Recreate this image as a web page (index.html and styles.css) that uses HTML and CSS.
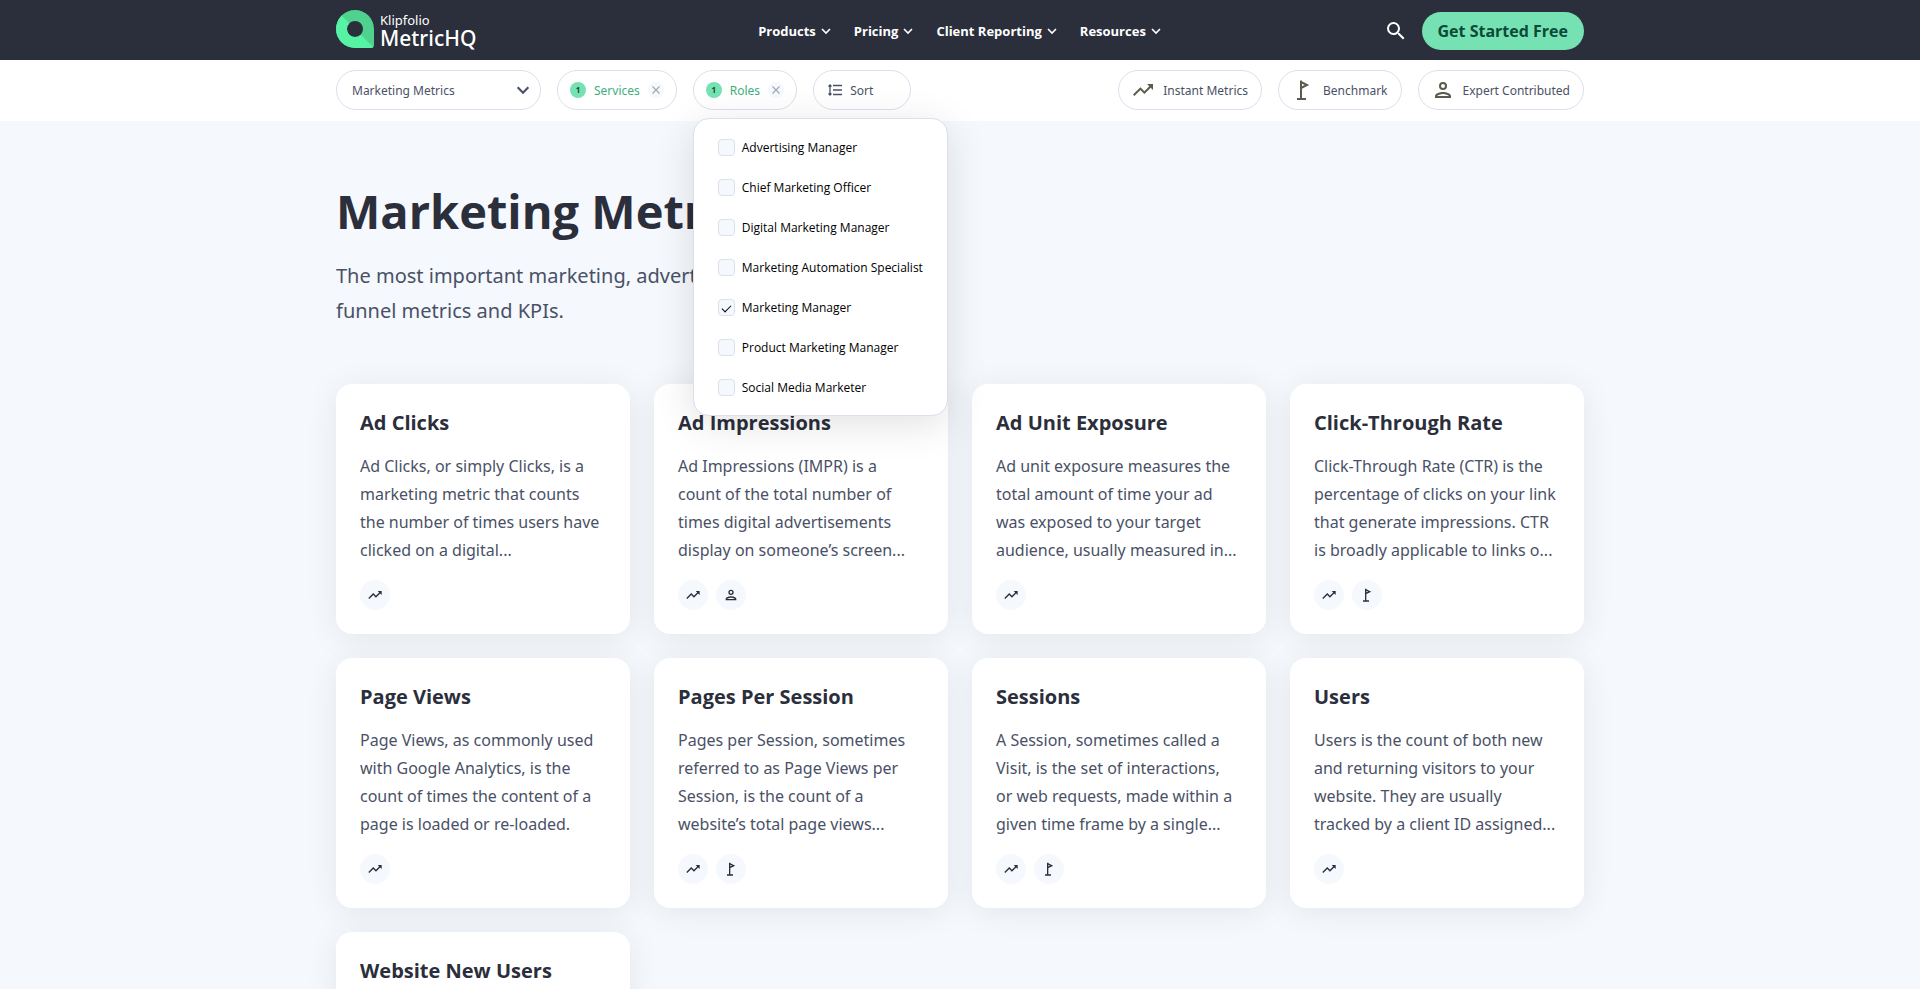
FILE: index.html
```html
<!DOCTYPE html>
<html lang="en">
<head>
<meta charset="utf-8">
<title>Marketing Metrics | Klipfolio MetricHQ</title>
<link rel="stylesheet" href="styles.css">
</head>
<body>
<svg class="sprite" aria-hidden="true">
  <symbol id="chevron" viewBox="0 0 12 12"><path d="M2 4l4 4 4-4" fill="none" stroke="currentColor" stroke-width="1.6"/></symbol>
  <symbol id="trend" viewBox="0 0 24 24"><path fill="currentColor" d="M16 6l2.29 2.29-4.88 4.88-4-4L2 16.59 3.41 18l6-6 4 4 6.3-6.29L22 12V6z"/></symbol>
  <symbol id="person" viewBox="0 0 24 24"><path fill="currentColor" fill-rule="evenodd" d="M12 4a4 4 0 1 0 0 8 4 4 0 0 0 0-8zm0 2a2 2 0 1 1 0 4 2 2 0 0 1 0-4zm0 8c-2.7 0-8 1.3-8 4v2h16v-2c0-2.700-5.300-4-8-4zm-5.800 4c.6-.9 3.300-2 5.800-2s5.200 1.100 5.800 2z"/></symbol>
  <symbol id="flag" viewBox="0 0 24 24"><path fill="none" stroke="currentColor" stroke-width="2" d="M6 21h9M10 21V2.500M10 4l6 3-6 3"/></symbol>
  <symbol id="cross" viewBox="0 0 16 16"><path d="M4.500 4.500l7 7m0-7l-7 7" fill="none" stroke="currentColor" stroke-width="1.200"/></symbol>
</svg>

<header class="header">
  <div class="container header-row">
    <a class="logo" href="#">
      <svg class="logo-mark" viewBox="0 0 38 38" aria-hidden="true">
        <path fill="#4ed28e" fill-rule="evenodd" d="M19 0a19 19 0 0 0 0 38h16a3 3 0 0 0 3-3V19A19 19 0 0 0 19 0zm0 11a8 8 0 1 1 0 16 8 8 0 0 1 0-16z"/>
        <path fill="#57f3a4" d="M5.600 5.600A19 19 0 0 0 19 38h16a3 3 0 0 0 2.100-.9L24.700 24.700A8 8 0 0 1 13.300 13.300z"/>
      </svg>
      <span class="logo-text"><span class="logo-brand">Klipfolio</span><span class="logo-name">MetricHQ</span></span>
    </a>
    <nav class="nav">
      <button class="nav-item" type="button">Products<svg><use href="#chevron"/></svg></button>
      <button class="nav-item" type="button">Pricing<svg><use href="#chevron"/></svg></button>
      <button class="nav-item" type="button">Client Reporting<svg><use href="#chevron"/></svg></button>
      <button class="nav-item" type="button">Resources<svg><use href="#chevron"/></svg></button>
    </nav>
    <div class="actions">
      <button class="search" type="button" aria-label="Search"><svg viewBox="0 0 24 24"><path fill="currentColor" d="M15.500 14h-.79l-.28-.27A6.470 6.470 0 0 0 16 9.500 6.500 6.500 0 1 0 9.500 16c1.610 0 3.090-.59 4.230-1.570l.27.28v.79l5 4.990L20.490 19l-4.990-5zm-6 0C7.010 14 5 11.990 5 9.500S7.010 5 9.500 5 14 7.010 14 9.500 11.990 14 9.500 14z"/></svg></button>
      <a class="cta" href="#">Get Started Free</a>
    </div>
  </div>
</header>

<div class="filters">
  <div class="container filter-row">
    <div class="category">
      <select class="chip category-select" aria-label="Category"><option>Marketing Metrics</option></select>
      <svg class="category-arrow" aria-hidden="true"><use href="#chevron"/></svg>
    </div>
    <div class="chip chip-active">
      <span class="count">1</span><button class="chip-label" type="button">Services</button>
      <button class="clear" type="button" aria-label="Clear services"><svg><use href="#cross"/></svg></button>
    </div>
    <div class="dropdown">
      <div class="chip chip-active">
        <span class="count">1</span><button class="chip-label" type="button" aria-expanded="true">Roles</button>
        <button class="clear" type="button" aria-label="Clear roles"><svg><use href="#cross"/></svg></button>
      </div>
      <div class="menu">
        <label class="option"><input type="checkbox">Advertising Manager</label>
        <label class="option"><input type="checkbox">Chief Marketing Officer</label>
        <label class="option"><input type="checkbox">Digital Marketing Manager</label>
        <label class="option"><input type="checkbox">Marketing Automation Specialist</label>
        <label class="option"><input type="checkbox" checked>Marketing Manager</label>
        <label class="option"><input type="checkbox">Product Marketing Manager</label>
        <label class="option"><input type="checkbox">Social Media Marketer</label>
      </div>
    </div>
    <button class="chip sort" type="button">
      <svg viewBox="0 0 14 12" aria-hidden="true"><path d="M5 1.500h9M5 6h9M5 10.500h9M2 1v10M.5 2.500L2 1l1.500 1.500M.5 9.500L2 11l1.500-1.500" fill="none" stroke="currentColor" stroke-width="1.300"/></svg>Sort
    </button>
    <div class="tags">
      <button class="chip tag" type="button"><svg><use href="#trend"/></svg>Instant Metrics</button>
      <button class="chip tag" type="button"><svg><use href="#flag"/></svg>Benchmark</button>
      <button class="chip tag" type="button"><svg><use href="#person"/></svg>Expert Contributed</button>
    </div>
  </div>
</div>

<main class="container main">
  <h1 class="title">Marketing Metrics</h1>
  <p class="intro">The most important marketing, advertising, and sales funnel metrics and KPIs.</p>
  <div class="grid">
    <article class="card"><h2>Ad Clicks</h2><p>Ad Clicks, or simply Clicks, is a marketing metric that counts the number of times users have clicked on a digital...</p><div class="badges"><span><svg><use href="#trend"/></svg></span></div></article>
    <article class="card"><h2>Ad Impressions</h2><p>Ad Impressions (IMPR) is a count of the total number of times digital advertisements display on someone’s screen...</p><div class="badges"><span><svg><use href="#trend"/></svg></span><span><svg><use href="#person"/></svg></span></div></article>
    <article class="card"><h2>Ad Unit Exposure</h2><p>Ad unit exposure measures the total amount of time your ad was exposed to your target audience, usually measured in...</p><div class="badges"><span><svg><use href="#trend"/></svg></span></div></article>
    <article class="card"><h2>Click-Through Rate</h2><p>Click-Through Rate (CTR) is the percentage of clicks on your link that generate impressions. CTR is broadly applicable to links o...</p><div class="badges"><span><svg><use href="#trend"/></svg></span><span><svg><use href="#flag"/></svg></span></div></article>
    <article class="card"><h2>Page Views</h2><p>Page Views, as commonly used with Google Analytics, is the count of times the content of a page is loaded or re-loaded.</p><div class="badges"><span><svg><use href="#trend"/></svg></span></div></article>
    <article class="card"><h2>Pages Per Session</h2><p>Pages per Session, sometimes referred to as Page Views per Session, is the count of a website’s total page views...</p><div class="badges"><span><svg><use href="#trend"/></svg></span><span><svg><use href="#flag"/></svg></span></div></article>
    <article class="card"><h2>Sessions</h2><p>A Session, sometimes called a Visit, is the set of interactions, or web requests, made within a given time frame by a single...</p><div class="badges"><span><svg><use href="#trend"/></svg></span><span><svg><use href="#flag"/></svg></span></div></article>
    <article class="card"><h2>Users</h2><p>Users is the count of both new and returning visitors to your website. They are usually tracked by a client ID assigned...</p><div class="badges"><span><svg><use href="#trend"/></svg></span></div></article>
    <article class="card"><h2>Website New Users</h2><p>Website New Users is the count of first-time visitors to your website in a given period.</p><div class="badges"><span><svg><use href="#trend"/></svg></span></div></article>
  </div>
</main>
</body>
</html>
```

FILE: styles.css
```css
* { box-sizing: border-box; }

body {
  margin: 0;
  background: #f5f8fd;
  color: #4a5166;
  font-family: "Open Sans", "Noto Sans", sans-serif;
  font-size: 16px;
}

button, select, input { font: inherit; color: inherit; margin: 0; }
button { background: none; border: 0; padding: 0; cursor: pointer; }
a { text-decoration: none; }
.sprite { display: none; }

.container {
  width: 100%;
  max-width: 1248px;
  margin: 0 auto;
}

/* Header */
.header { position: relative; z-index: 3; background: #2b2e3b; color: #fff; }
.header-row { display: grid; grid-template-columns: 1fr auto 1fr; align-items: center; height: 60px; padding-top: 2px; }
.logo { display: flex; align-items: center; gap: 6px; margin-bottom: 4px; color: #fff; }
.logo-mark { width: 38px; height: 38px; }
.logo-text { display: flex; flex-direction: column; padding-top: 2px; font-family: "Noto Sans", sans-serif; }
.logo-brand { font-size: 13px; line-height: 16px; }
.logo-name { font-size: 21px; line-height: 20px; font-weight: 500; }
.nav { display: flex; gap: 22px; }
.nav-item { display: flex; align-items: center; gap: 4px; font-size: 13px; font-weight: 700; }
.nav-item svg { width: 12px; height: 12px; }
.actions { display: flex; align-items: center; justify-content: flex-end; gap: 14px; }
.search, .search svg { display: block; width: 24px; height: 24px; }
.cta {
  padding: 0 16px;
  border-radius: 19px;
  background: #76e2b3;
  color: #0b4a36;
  font-size: 16px;
  line-height: 38px;
  font-weight: 700;
}

/* Filter bar */
.filters { position: relative; z-index: 2; background: #fff; }
.filter-row { display: flex; align-items: center; gap: 16px; padding: 10px 0 11px; }
.chip {
  display: flex;
  align-items: center;
  height: 40px;
  border: 1px solid #dcdfec;
  border-radius: 20px;
  font-family: "Noto Sans", sans-serif;
  font-size: 12px;
}
.category { position: relative; }
.category-select { width: 205px; padding: 0 15px; appearance: none; background: #fff; }
.category-arrow { position: absolute; top: 12px; right: 10px; width: 16px; height: 16px; pointer-events: none; }
.chip-active { padding: 0 12px; }
.count {
  width: 16px;
  border-radius: 8px;
  background: #76e2b3;
  color: #0b4a36;
  font-size: 8px;
  line-height: 16px;
  font-weight: 700;
  text-align: center;
}
.chip-label { margin: 0 8px; color: #3fae7c; }
.clear { display: flex; border-radius: 8px; background: #f5f8fd; color: #a3a7b2; }
.clear svg { width: 16px; height: 16px; }
.sort { width: 98px; padding: 0 14px; gap: 8px; }
.sort svg { width: 14px; height: 12px; }
.tags { display: flex; gap: 16px; margin-left: auto; }
.tag { gap: 8px; padding: 0 13px 0 12px; }
.tag svg { width: 24px; height: 24px; color: #5b5d4c; }

.dropdown { position: relative; }
.menu {
  position: absolute;
  top: 48px;
  left: 0;
  padding: 8px 24px;
  border: 1px solid #dcdfec;
  border-radius: 16px;
  background: #fff;
  box-shadow: 0 8px 40px rgba(0, 0, 0, 0.12);
}
.option { display: flex; align-items: center; gap: 7px; height: 40px; color: #000; font-size: 12px; white-space: nowrap; }
.option input {
  appearance: none;
  width: 17px;
  height: 17px;
  border: 1px solid #dcdfec;
  border-radius: 4px;
  background: #f5f8fd;
}
.option input:checked::before {
  content: "";
  display: block;
  width: 8px;
  height: 4px;
  margin: 5px 3px;
  border: solid #000;
  border-width: 0 0 1px 1px;
  transform: rotate(-45deg);
}

/* Content */
.main { padding: 54px 0 24px; }
.title { margin: 0; color: #2b2e3b; font-size: 47px; line-height: 72px; font-weight: 700; }
.intro { max-width: 560px; margin: 11px 0 56px; font-family: "Noto Sans", sans-serif; font-size: 20px; line-height: 35px; }
.grid { display: grid; grid-template-columns: repeat(4, 1fr); gap: 24px; }
.card {
  padding: 24px;
  border-radius: 16px;
  background: #fff;
  box-shadow: 0 4px 32px rgba(0, 0, 0, 0.08);
}
.card h2 { margin: 0; color: #2b2e3b; font-size: 20px; line-height: 30px; font-weight: 700; }
.card p { margin: 14px 0 16px; padding-right: 2px; font-family: "Noto Sans", sans-serif; line-height: 28px; }
.badges { display: flex; gap: 8px; color: #2b2e3b; }
.badges span { display: flex; padding: 7px; border-radius: 15px; background: #f5f8fd; }
.badges svg { width: 16px; height: 16px; }
```
